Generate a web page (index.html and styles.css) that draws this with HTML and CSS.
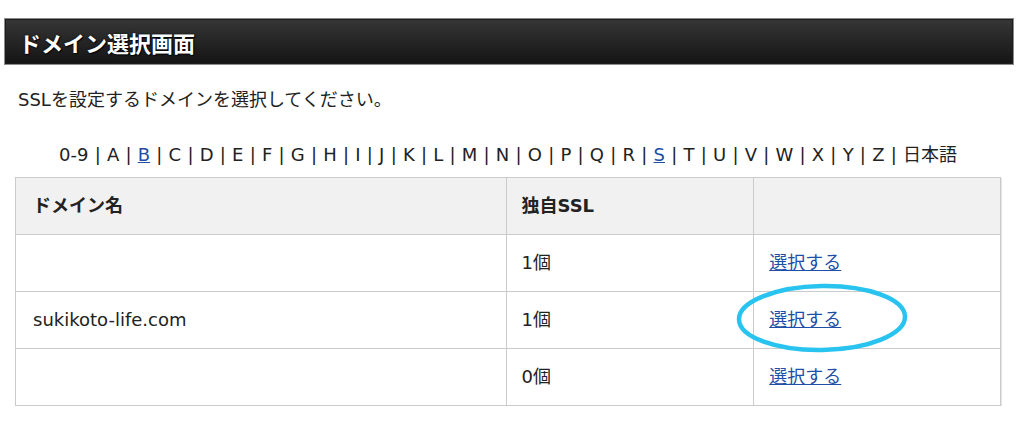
FILE: index.html
```html
<!DOCTYPE html>
<html lang="ja">
<head>
<meta charset="utf-8">
<title>ドメイン選択画面</title>
<link rel="stylesheet" href="styles.css">
</head>
<body>
<div class="page-title"><h1>ドメイン選択画面</h1></div>
<div class="content">
  <p class="lead">SSLを設定するドメインを選択してください。</p>
  <p class="index">0-9 | A | <a href="#">B</a> | C | D | E | F | G | H | I | J | K | L | M | N | O | P | Q | R | <a href="#">S</a> | T | U | V | W | X | Y | Z | 日本語</p>
  <table class="domains">
    <colgroup><col class="c1"><col class="c2"><col class="c3"></colgroup>
    <thead>
      <tr><th>ドメイン名</th><th>独自SSL</th><th></th></tr>
    </thead>
    <tbody>
      <tr><td></td><td>1個</td><td><a href="#">選択する</a></td></tr>
      <tr><td>sukikoto-life.com</td><td>1個</td><td><span class="marked"><a href="#">選択する</a><svg class="ring" width="176" height="72" viewBox="0 0 176 72"><ellipse cx="88" cy="36" rx="83" ry="32" fill="none" stroke="#29c3f0" stroke-width="4.5" transform="rotate(-1 88 36)"/></svg></span></td></tr>
      <tr><td></td><td>0個</td><td><a href="#">選択する</a></td></tr>
    </tbody>
  </table>
</div>
</body>
</html>
```
FILE: styles.css
```css
html, body {
  margin: 0;
  padding: 0;
  background: #fff;
}
body {
  font-family: "DejaVu Sans", "Noto Sans CJK JP", sans-serif;
  color: #222;
  font-size: 18px;
}
.page-title {
  margin: 18px 10px 0 4px;
  height: 45px;
  border: 1px solid #8c8c8c;
  background: linear-gradient(#363636, #141414);
  box-shadow: inset 0 0 0 1px #1c1c1c;
  display: flex;
  align-items: center;
}
.page-title h1 {
  margin: 0 0 0 14px;
  font-family: "Noto Sans CJK JP", sans-serif;
  font-size: 22px;
  font-weight: 700;
  color: #fff;
  line-height: 28px;
  text-shadow: 1px 1px 1px #000, 0 0 2px #000;
}
.content {
  padding: 0 23px 0 15px;
}
.lead {
  margin: 23px 0 0 3px;
  line-height: 24px;
}
.index {
  margin: 31px 0 0;
  line-height: 24px;
  text-align: center;
  word-spacing: 0.5px;
}
a {
  color: #1e4ea6;
  text-decoration: underline;
}
.domains {
  margin-top: 10px;
  width: 986px;
  border-collapse: collapse;
  box-shadow: 1px 1px 0 #e4e4e4;
}
.c1 { width: 491px; }
.c2 { width: 248px; }
.c3 { width: 247px; }
.domains th, .domains td {
  border: 1px solid #cbcbcb;
  height: 57px;
  padding: 0 15px;
  line-height: 24px;
  text-align: left;
  vertical-align: middle;
  box-sizing: border-box;
}
.domains th {
  background: #f1f1f1;
  font-weight: 700;
}
.domains th:first-child, .domains td:first-child {
  padding-left: 17px;
}
.marked {
  position: relative;
  display: inline-block;
}
.ring {
  position: absolute;
  left: -35px;
  top: -26px;
  pointer-events: none;
}
```
